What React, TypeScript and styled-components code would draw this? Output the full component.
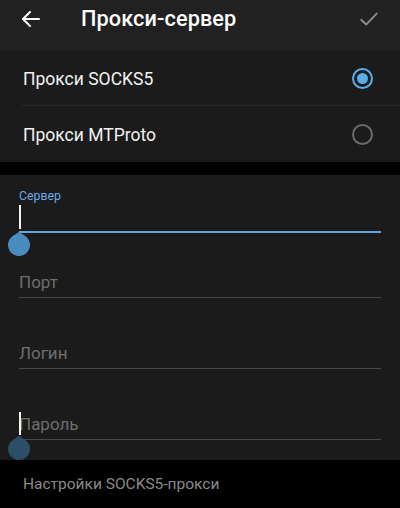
import React from "react";
import styled, { createGlobalStyle } from "styled-components";

const Global = createGlobalStyle`
  html, body { margin: 0; padding: 0; background: #000; }
  body { font-family: Roboto, "Noto Sans", "Liberation Sans", sans-serif; -webkit-font-smoothing: antialiased; }
  * { box-sizing: border-box; }
`;

const Page = styled.div`
  width: 400px;
  height: 508px;
  background: #000;
  display: flex;
  flex-direction: column;
  overflow: hidden;
`;

const Header = styled.header`
  height: 50px;
  flex: none;
  background: #212121;
  display: flex;
  align-items: center;
  padding: 0 22px 12px 22px;
`;

const IconBtn = styled.div`
  width: 18px;
  height: 18px;
  display: flex;
  align-items: center;
  justify-content: center;
  flex: none;
`;

const Title = styled.h1`
  margin: 0 0 0 41px;
  flex: 1;
  font-size: 21.7px;
  font-weight: 500;
  color: #ffffff;
  letter-spacing: 0.1px;
  line-height: 24px;
`;

const Section = styled.section`
  background: #1b1b1b;
  flex: none;
`;

const RadioRow = styled.div<{ $divider?: boolean }>`
  height: 56px;
  display: flex;
  align-items: center;
  padding: 0 27px 0 23px;
  position: relative;
  ${(p) =>
    p.$divider &&
    `&::before {
      content: "";
      position: absolute;
      left: 22px;
      right: 0;
      top: -1px;
      height: 1px;
      background: #2a2a2a;
    }`}
`;

const RowLabel = styled.span`
  flex: 1;
  font-size: 17.5px;
  color: #f2f2f2;
  line-height: 24px;
  padding-top: 2px;
`;

const Radio = styled.span<{ $on?: boolean }>`
  width: 21px;
  height: 21px;
  border-radius: 50%;
  border: 2px solid ${(p) => (p.$on ? "#5aaeea" : "#6a6a6a")};
  display: flex;
  align-items: center;
  justify-content: center;
  &::after {
    content: "";
    width: 11px;
    height: 11px;
    border-radius: 50%;
    background: ${(p) => (p.$on ? "#5aaeea" : "transparent")};
  }
`;

const Gap = styled.div`
  height: 13px;
  flex: none;
`;

const Fields = styled(Section)`
  flex: 1;
  padding: 14px 19px 0 19px;
  display: flex;
  flex-direction: column;
`;

const Field = styled.div<{ $mt: number }>`
  margin-top: ${(p) => p.$mt}px;
  display: flex;
  flex-direction: column;
`;

const FloatLabel = styled.div`
  font-size: 12.3px;
  line-height: 14px;
  color: #6aaae6;
`;

const InputRow = styled.div<{ $focused?: boolean }>`
  position: relative;
  height: ${(p) => (p.$focused ? 30 : 29)}px;
  border-bottom: ${(p) => (p.$focused ? "2px solid #5ea7e0" : "1px solid #464646")};
  font-size: 17px;
  line-height: 24px;
  color: #6e6e6e;
  padding-top: 1px;
`;

const Caret = styled.span<{ $top: number; $h: number }>`
  position: absolute;
  left: 0;
  top: ${(p) => p.$top}px;
  width: 2px;
  height: ${(p) => p.$h}px;
  background: #f4f4f4;
`;

const Handle = styled.svg<{ $top: number }>`
  position: absolute;
  left: -11px;
  top: ${(p) => p.$top}px;
  width: 22px;
  height: 24px;
  z-index: 1;
`;

const Footer = styled.footer`
  height: 48px;
  flex: none;
  background: #000;
  display: flex;
  align-items: center;
  padding: 0 23px;
  font-size: 15.5px;
  color: #8a8a8a;
  position: relative;
  z-index: 2;
`;

const Drop = ({ top, color }: { top: number; color: string }) => (
  <Handle $top={top} viewBox="0 0 22 24">
    <path d="M11 0 L16.86 3.69 A11 11 0 1 1 5.14 3.69 Z" fill={color} />
  </Handle>
);

export default function App() {
  return (
    <Page>
      <Global />
      <Header>
        <IconBtn>
          <svg width="18" height="16" viewBox="0 0 18 16" fill="none" stroke="#fff" strokeWidth="2" strokeLinecap="round" strokeLinejoin="round">
            <path d="M1 8 H17" />
            <path d="M8 1 L1 8 L8 15" />
          </svg>
        </IconBtn>
        <Title>Прокси-сервер</Title>
        <IconBtn>
          <svg width="20" height="16" viewBox="0 0 20 16" fill="none" stroke="#8d8d8d" strokeWidth="2.2" strokeLinecap="round" strokeLinejoin="round">
            <path d="M1.5 9 L7 14 L18.5 2" />
          </svg>
        </IconBtn>
      </Header>

      <Section>
        <RadioRow>
          <RowLabel>Прокси SOCKS5</RowLabel>
          <Radio $on />
        </RadioRow>
        <RadioRow $divider>
          <RowLabel>Прокси MTProto</RowLabel>
          <Radio />
        </RadioRow>
      </Section>

      <Gap />

      <Fields as="section">
        <Field $mt={0}>
          <FloatLabel>Сервер</FloatLabel>
          <InputRow $focused>
            <Caret $top={2} $h={24} />
            <Drop top={29} color="#4a8bbd" />
          </InputRow>
        </Field>
        <Field $mt={36}>
          <InputRow>Порт</InputRow>
        </Field>
        <Field $mt={42}>
          <InputRow>Логин</InputRow>
        </Field>
        <Field $mt={42}>
          <InputRow>
            <Caret $top={1} $h={23} />
            Пароль
            <Drop top={25} color="#2c4f68" />
          </InputRow>
        </Field>
      </Fields>

      <Footer>Настройки SOCKS5-прокси</Footer>
    </Page>
  );
}
